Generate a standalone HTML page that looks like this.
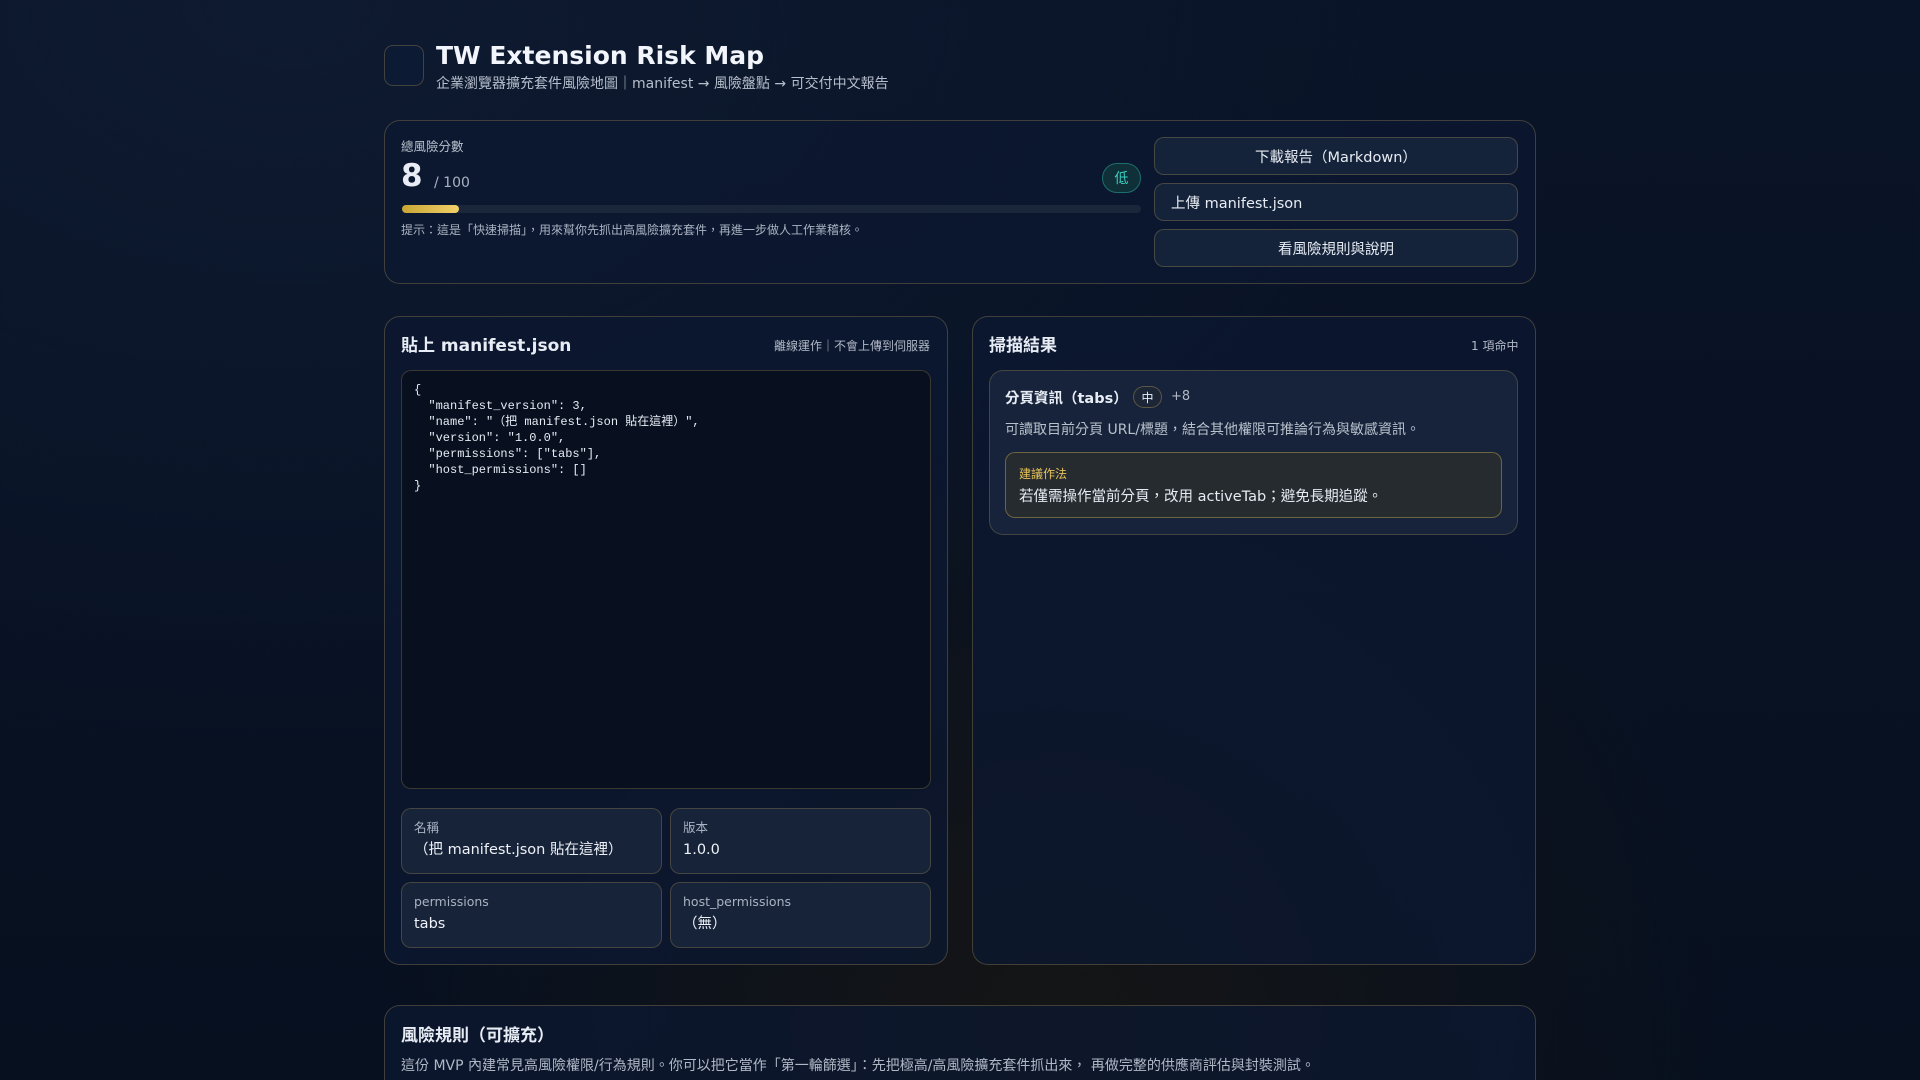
<!DOCTYPE html><html><head><meta charset="utf-8"><style>
*{box-sizing:border-box;margin:0;padding:0}
html{width:1920px;height:1080px;overflow:hidden}
body{width:1920px;height:1080px;overflow:hidden;background:#081226;background:radial-gradient(ellipse at 15% 0%,#0e1a30 0%,transparent 50%),radial-gradient(ellipse at 55% 95%,#151515 0%,transparent 45%),linear-gradient(180deg,#0a1428,#07101f);font-family:"DejaVu Sans","Noto Sans CJK TC",sans-serif;color:#e8edf5;position:relative}
.a{position:absolute}
.card{position:absolute;border:1px solid rgba(190,160,90,.3);border-radius:16px;background:rgba(12,24,50,.75)}
.btn{position:absolute;left:1154px;width:364px;height:38px;border:1px solid rgba(190,160,90,.3);border-radius:10px;background:#15233a;font-size:14.5px;color:#e6ebf3;display:flex;align-items:center;justify-content:center}
.box{position:absolute;border:1px solid rgba(190,160,90,.28);border-radius:10px;background:#172338;padding:11px 12px}
.box .l{font-size:12.5px;color:#a9b3c3;line-height:16px}.box .v{font-size:14.5px;margin-top:4px;color:#eef2f8;line-height:20px}
</style></head><body>
<div class="a" style="left:384px;top:45px;width:40px;height:41px;border:1px solid rgba(190,160,90,.3);border-radius:9px;background:#0d1a33"></div>
<div class="a" style="left:436px;top:41px;font-size:25px;font-weight:bold;color:#f2f5fb">TW Extension Risk Map</div>
<div class="a" style="left:436px;top:73px;font-size:14px;color:#b6bfcd">企業瀏覽器擴充套件風險地圖｜manifest → 風險盤點 → 可交付中文報告</div>

<div class="card" style="left:384px;top:120px;width:1152px;height:164px"></div>
<div class="a" style="left:401px;top:136px;font-size:12.5px;color:#b8c0cc">總風險分數</div>
<div class="a" style="left:401px;top:158px;font-size:31px;font-weight:bold">8</div>
<div class="a" style="left:434px;top:175px;font-size:14px;color:#aab3c2">/ 100</div>
<div class="a" style="left:1102px;top:163px;width:39px;height:30px;border:1px solid #1e6e6c;border-radius:15px;background:#0f3038;color:#3ad0c0;font-size:14px;display:flex;align-items:center;justify-content:center">低</div>
<div class="a" style="left:402px;top:205px;width:739px;height:8px;border-radius:4px;background:#1a263a"></div>
<div class="a" style="left:402px;top:205px;width:57px;height:8px;border-radius:4px;background:linear-gradient(90deg,#c9a535,#f1d06a)"></div>
<div class="a" style="left:401px;top:221px;font-size:12px;color:#aab3c2">提示：這是「快速掃描」，用來幫你先抓出高風險擴充套件，再進一步做人工作業稽核。</div>
<div class="btn" style="top:137px">下載報告（Markdown）</div>
<div class="btn" style="top:183px;justify-content:flex-start;padding-left:16px">上傳 manifest.json</div>
<div class="btn" style="top:229px">看風險規則與說明</div>

<div class="card" style="left:384px;top:316px;width:564px;height:649px"></div>
<div class="a" style="left:401px;top:331px;font-size:17px;font-weight:bold">貼上 manifest.json</div>
<div class="a" style="left:774px;top:337px;font-size:12px;color:#b0b8c6">離線運作｜不會上傳到伺服器</div>
<div class="a" style="left:401px;top:370px;width:530px;height:419px;border:1px solid rgba(190,160,90,.28);border-radius:10px;background:#081020"></div>
<pre class="a" style="left:414px;top:382px;font-family:'Liberation Mono','Noto Sans CJK TC',monospace;font-size:12px;line-height:16px;color:#e6ebf3">{
  "manifest_version": 3,
  "name": "（把 manifest.json 貼在這裡）",
  "version": "1.0.0",
  "permissions": ["tabs"],
  "host_permissions": []
}</pre>
<div class="box" style="left:401px;top:808px;width:261px;height:66px"><div class="l">名稱</div><div class="v">（把 manifest.json 貼在這裡）</div></div>
<div class="box" style="left:670px;top:808px;width:261px;height:66px"><div class="l">版本</div><div class="v">1.0.0</div></div>
<div class="box" style="left:401px;top:882px;width:261px;height:66px"><div class="l">permissions</div><div class="v">tabs</div></div>
<div class="box" style="left:670px;top:882px;width:261px;height:66px"><div class="l">host_permissions</div><div class="v">（無）</div></div>

<div class="card" style="left:972px;top:316px;width:564px;height:649px"></div>
<div class="a" style="left:989px;top:331px;font-size:17px;font-weight:bold">掃描結果</div>
<div class="a" style="left:1471px;top:337px;font-size:12px;color:#b0b8c6">1 項命中</div>
<div class="a" style="left:989px;top:370px;width:529px;height:165px;border:1px solid rgba(190,160,90,.28);border-radius:14px;background:#16233a"></div>
<div class="a" style="left:1005px;top:387px;font-size:14.5px;font-weight:bold">分頁資訊（tabs）</div>
<div class="a" style="left:1133px;top:386px;width:29px;height:22px;border:1px solid rgba(190,160,90,.4);border-radius:11px;background:#1c2637;font-size:12px;display:flex;align-items:center;justify-content:center">中</div>
<div class="a" style="left:1171px;top:389px;font-size:13px;color:#b0b8c6">+8</div>
<div class="a" style="left:1005px;top:419px;font-size:14px;color:#b8c0cc">可讀取目前分頁 URL/標題，結合其他權限可推論行為與敏感資訊。</div>
<div class="a" style="left:1005px;top:452px;width:497px;height:66px;border:1px solid rgba(200,170,80,.45);border-radius:10px;background:#262b30"></div>
<div class="a" style="left:1019px;top:465px;font-size:12px;color:#e8c25a">建議作法</div>
<div class="a" style="left:1019px;top:485px;font-size:14.5px;color:#e6ebf3">若僅需操作當前分頁，改用 activeTab；避免長期追蹤。</div>

<div class="card" style="left:384px;top:1005px;width:1152px;height:100px"></div>
<div class="a" style="left:401px;top:1021px;font-size:17px;font-weight:bold">風險規則（可擴充）</div>
<div class="a" style="left:401px;top:1055px;font-size:14px;color:#b0b8c6">這份 MVP 內建常見高風險權限/行為規則。你可以把它當作「第一輪篩選」：先把極高/高風險擴充套件抓出來， 再做完整的供應商評估與封裝測試。</div>
</body></html>
